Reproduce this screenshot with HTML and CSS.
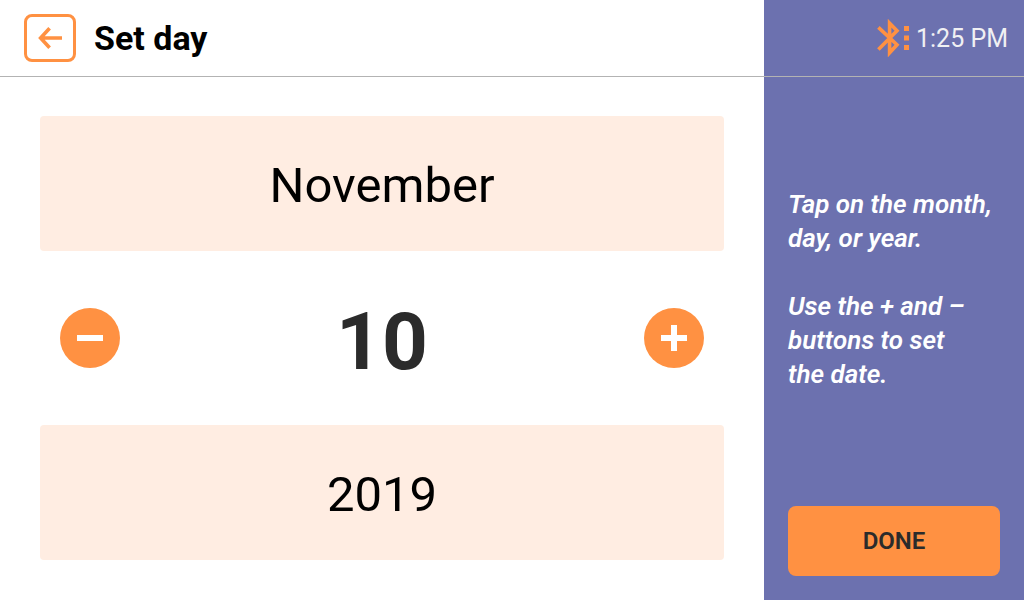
FILE: index.html
```html
<!DOCTYPE html>
<html lang="en">
<head>
<meta charset="utf-8">
<meta name="viewport" content="width=device-width, initial-scale=1">
<title>Set day</title>
<link rel="stylesheet" href="styles.css">
</head>
<body>
<div class="screen">
  <main class="main">
    <header class="bar">
      <button class="back" type="button" aria-label="Back">
        <svg width="24" height="24" viewBox="0 0 24 24" fill="none" stroke="currentColor" stroke-width="3.6" aria-hidden="true">
          <path d="M11.6 2.2 2.6 12l9 9.8M2.6 12H24"/>
        </svg>
      </button>
      <h1 class="title">Set day</h1>
    </header>
    <div class="picker">
      <button class="field" type="button">November</button>
      <div class="stepper">
        <button class="step" type="button" aria-label="Decrease day">
          <svg width="26" height="26" viewBox="0 0 26 26" fill="currentColor" aria-hidden="true"><path d="M0 10h26v6H0z"/></svg>
        </button>
        <output class="day">10</output>
        <button class="step" type="button" aria-label="Increase day">
          <svg width="26" height="26" viewBox="0 0 26 26" fill="currentColor" aria-hidden="true"><path d="M0 10h10V0h6v10h10v6H16v10h-6V16H0z"/></svg>
        </button>
      </div>
      <button class="field" type="button">2019</button>
    </div>
  </main>
  <aside class="side">
    <div class="bar status">
      <svg width="34" height="38" viewBox="0 0 34 38" aria-hidden="true">
        <path d="M2.4 8.4 21 25.8 13.6 33.800V4.200L21 11.800 2.400 30.600" fill="none" stroke="#ff9142" stroke-width="3.6"/>
        <path d="M28 7h5v5h-5zM28 16.500h5v5h-5zM28 26h5v5h-5z" fill="#ff9142"/>
      </svg>
      <time class="clock" datetime="13:25">1:25 PM</time>
    </div>
    <div class="help">
      <p>Tap on the month,<br>day, or year.</p>
      <p>Use the + and –<br>buttons to set<br>the date.</p>
    </div>
    <button class="done" type="button">DONE</button>
  </aside>
</div>
</body>
</html>
```
FILE: styles.css
```css
* { box-sizing: border-box; }

body {
  margin: 0;
  background: #fff;
  color: #000;
  font-family: Roboto, "Liberation Sans", sans-serif;
}

button {
  border: 0;
  padding: 0;
  font: inherit;
  color: inherit;
  cursor: pointer;
}

svg { display: block; }

.screen {
  display: grid;
  grid-template-columns: 1fr 260px;
  min-height: 100vh;
}

.main,
.side {
  display: flex;
  flex-direction: column;
}

.bar {
  display: flex;
  align-items: center;
  gap: 18px;
  height: 77px;
  padding: 0 24px;
  border-bottom: 1px solid #b3b3b3;
}

.back {
  display: grid;
  place-items: center;
  width: 52px;
  height: 48px;
  border: 3px solid #ff9142;
  border-radius: 8px;
  background: #fff;
  color: #ff9142;
}

.title {
  margin: 0;
  font-size: 34px;
  font-weight: 700;
}

.picker {
  flex: 1;
  display: grid;
  grid-template-rows: 135fr 174fr 135fr;
  padding: 39px 40px 40px;
}

.field {
  padding-top: 4px;
  border-radius: 4px;
  background: #ffede2;
  font-size: 49px;
}

.stepper {
  display: flex;
  align-items: center;
  justify-content: space-between;
  padding: 0 20px;
}

.step {
  display: grid;
  place-items: center;
  width: 60px;
  height: 60px;
  border-radius: 50%;
  background: #ff9142;
  color: #fff;
}

.day {
  padding-top: 8px;
  color: #2b2b2b;
  font-size: 80px;
  font-weight: 700;
  line-height: 1;
}

.side {
  background: #6c71af;
  color: #fff;
}

.status {
  justify-content: flex-end;
  gap: 6px;
  padding: 0 16px;
}

.clock {
  color: #f0f0f3;
  font-size: 25px;
}

.help {
  flex: 1;
  display: flex;
  flex-direction: column;
  justify-content: center;
  gap: 34px;
  padding: 0 24px 6px;
  font-size: 26px;
  font-style: italic;
  font-weight: 600;
  line-height: 34px;
  white-space: nowrap;
}

.help p { margin: 0; }

.done {
  height: 70px;
  margin: 0 24px 24px;
  border-radius: 8px;
  background: #ff9142;
  color: #2b2b2b;
  font-size: 24px;
  font-weight: 600;
}
```
